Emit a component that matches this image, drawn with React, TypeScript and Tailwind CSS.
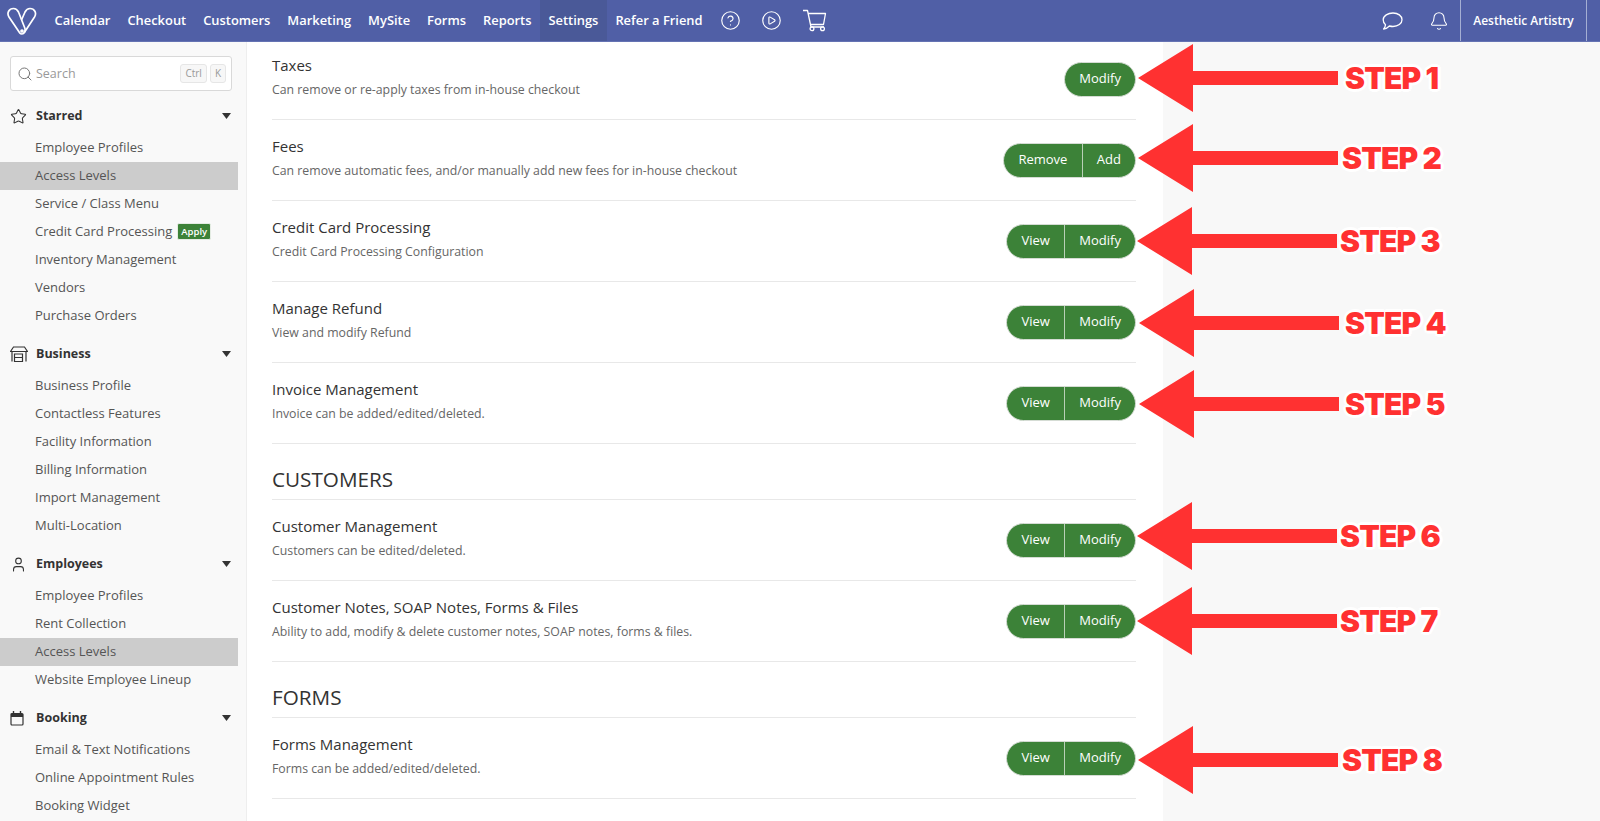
import React from 'react';
import { Bell, CircleHelp, CirclePlay, Search, Star, User } from 'lucide-react';

const navLinks = ['Calendar', 'Checkout', 'Customers', 'Marketing', 'MySite', 'Forms', 'Reports', 'Settings', 'Refer a Friend'];

const StoreIcon = () => (
	<svg width="18" height="16" viewBox="0 0 18 16" fill="none" stroke="#333" strokeWidth="1.2">
		<path d="M3.500 1h11l3 4.500H.5L3.500 1zM2 5.500v10M16 5.500v10M4.500 8h8v7.500h-8zM4.500 11.500h8" />
	</svg>
);

const CalendarIcon = () => (
	<svg width="14" height="15" viewBox="0 0 14 15" fill="none" stroke="#333">
		<rect x="1" y="2.500" width="12" height="11.500" rx="1" strokeWidth="1.2" />
		<path d="M1 4.500h12" strokeWidth="3" />
		<path d="M3.500 0v2.500M10.500 0v2.500" strokeWidth="1.400" />
	</svg>
);

const ChatIcon = () => (
	<svg width="21" height="18" viewBox="0 0 21 18" fill="none" stroke="#fff" strokeWidth="1.300" strokeLinejoin="round">
		<path d="M11 1c5 0 9 2.800 9 6.700s-4 6.800-9 6.800c-1.300 0-2.500-.2-3.600-.5C6 15.500 4 16.700 1.600 17c1-1.100 1.700-2.500 1.900-4.300C2 11.500 1.200 9.700 1.200 7.700 1.200 3.800 6 1 11 1z" />
	</svg>
);

const CartIcon = () => (
	<svg width="25" height="23" viewBox="0 0 25 23" fill="none" stroke="#fff" strokeWidth="1.300" strokeLinejoin="round">
		<path d="M1 1.500h4.500L9 18h13M6.200 4.500h17.300l-2 11H8.500" />
		<circle cx="10" cy="19.700" r="1.900" />
		<circle cx="20.500" cy="19.700" r="1.900" />
	</svg>
);

const Logo = () => (
	<svg width="30" height="28" viewBox="0 0 30 28" fill="none" stroke="#fff" strokeWidth="1.700">
		<path d="M12.800 26 2 10C-.5 6 2 1.500 6.500 1.500 9 1.500 10.500 3 11.500 5l6.300 16c1 3-.8 6-2.800 6-1 0-1.700-.3-2.200-1z" />
		<path d="M17 26 27.500 10C30 6 27.500 1.500 23 1.500c-2.500 0-4 1.500-5 3.500l-3.500 8" />
		<circle cx="15" cy="24" r="1" />
	</svg>
);

const Caret = () => (
	<svg width="9" height="6" viewBox="0 0 9 6" fill="#333">
		<path d="M0 0h9L4.500 6z" />
	</svg>
);

const sections = [
	{
		title: 'Starred',
		icon: <Star size={17} strokeWidth={1.5} />,
		items: ['Employee Profiles', 'Access Levels', 'Service / Class Menu', 'Credit Card Processing', 'Inventory Management', 'Vendors', 'Purchase Orders'],
	},
	{
		title: 'Business',
		icon: <StoreIcon />,
		items: ['Business Profile', 'Contactless Features', 'Facility Information', 'Billing Information', 'Import Management', 'Multi-Location'],
	},
	{
		title: 'Employees',
		icon: <User size={17} strokeWidth={1.5} />,
		items: ['Employee Profiles', 'Rent Collection', 'Access Levels', 'Website Employee Lineup'],
	},
	{
		title: 'Booking',
		icon: <CalendarIcon />,
		items: ['Email & Text Notifications', 'Online Appointment Rules', 'Booking Widget'],
	},
];

type Row = { title: string; desc: string; left?: string; right: string };

const permissions: { heading?: string; rows: Row[] }[] = [
	{
		rows: [
			{ title: 'Taxes', desc: 'Can remove or re-apply taxes from in-house checkout', right: 'Modify' },
			{ title: 'Fees', desc: 'Can remove automatic fees, and/or manually add new fees for in-house checkout', left: 'Remove', right: 'Add' },
			{ title: 'Credit Card Processing', desc: 'Credit Card Processing Configuration', left: 'View', right: 'Modify' },
			{ title: 'Manage Refund', desc: 'View and modify Refund', left: 'View', right: 'Modify' },
			{ title: 'Invoice Management', desc: 'Invoice can be added/edited/deleted.', left: 'View', right: 'Modify' },
		],
	},
	{
		heading: 'CUSTOMERS',
		rows: [
			{ title: 'Customer Management', desc: 'Customers can be edited/deleted.', left: 'View', right: 'Modify' },
			{ title: 'Customer Notes, SOAP Notes, Forms & Files', desc: 'Ability to add, modify & delete customer notes, SOAP notes, forms & files.', left: 'View', right: 'Modify' },
		],
	},
	{
		heading: 'FORMS',
		rows: [{ title: 'Forms Management', desc: 'Forms can be added/edited/deleted.', left: 'View', right: 'Modify' }],
	},
];

const steps = [
	{ label: 'STEP 1', y: 78, tip: 1138, text: 1345 },
	{ label: 'STEP 2', y: 158, tip: 1138, text: 1342 },
	{ label: 'STEP 3', y: 241, tip: 1137, text: 1340 },
	{ label: 'STEP 4', y: 323, tip: 1139, text: 1345 },
	{ label: 'STEP 5', y: 404, tip: 1139, text: 1345 },
	{ label: 'STEP 6', y: 536, tip: 1137, text: 1340 },
	{ label: 'STEP 7', y: 621, tip: 1137, text: 1340 },
	{ label: 'STEP 8', y: 760, tip: 1138, text: 1342 },
];

const PillButtons = ({ left, right }: { left?: string; right: string }) => (
	<div className="flex h-[35px] overflow-hidden rounded-full border border-[#d5dcd4] bg-[#3c8238] text-[13px] font-medium text-white">
		{left && <span className="flex items-center border-r border-[#b9d0b7] px-[14.500px]">{left}</span>}
		<span className="flex items-center px-[14px]">{right}</span>
	</div>
);

const StepArrow = ({ label, y, tip, text }: { label: string; y: number; tip: number; text: number }) => (
	<>
		<svg className="absolute" style={{ left: tip, top: y - 35 }} width="206" height="70" viewBox="0 0 206 70" fill="#ff3131">
			<path d="M0 35 55 1v27h145v14H55v27z" />
		</svg>
		<span
			className="absolute font-['Inter',sans-serif] text-[30px] leading-[36px] font-black tracking-[-0.8px] whitespace-nowrap text-[#ff3131] [text-shadow:-2px_-2px_0_#fff,2px_-2px_0_#fff,-2px_2px_0_#fff,2px_2px_0_#fff,0_3px_0_#fff,0_-3px_0_#fff,3px_0_0_#fff,-3px_0_0_#fff]"
			style={{ left: text, top: y - 18 }}
		>
			{label}
		</span>
	</>
);

const Sidebar = () => (
	<aside className="w-[247px] shrink-0 overflow-hidden border-r border-[#eeeeee] bg-[#f9f9f9]">
		<div className="mx-[10px] mt-[14px] mb-[7px] flex h-[35px] w-[222px] items-center rounded-[3px] border border-[#d9d9d9] bg-white pr-[5px] pl-[6px]">
			<Search size={16} strokeWidth={1.5} className="text-[#777]" />
			<span className="ml-[3px] flex-1 pt-[2px] text-[12.500px] text-[#999]">Search</span>
			<span className="rounded-[3px] border border-[#e6e6e6] bg-[#f7f7f7] px-[4px] py-[1px] text-[10px] text-[#999]">Ctrl</span>
			<span className="ml-[3px] rounded-[3px] border border-[#e6e6e6] bg-[#f7f7f7] px-[4px] py-[1px] text-[10px] text-[#999]">K</span>
		</div>
		{sections.map((section) => (
			<div key={section.title} className="mb-[6px] w-[238px]">
				<div className="flex h-[36px] items-center pr-[7px] pl-[10px]">
					<span className="flex w-[26px] text-[#333]">{section.icon}</span>
					<span className="flex-1 text-[12.500px] font-bold text-[#333]">{section.title}</span>
					<Caret />
				</div>
				{section.items.map((item) => (
					<div
						key={item}
						className={`flex h-[28px] items-center pl-[35px] text-[13px] text-[#555] ${item === 'Access Levels' ? 'bg-[#cccccc]' : ''}`}
					>
						{item}
						{item === 'Credit Card Processing' && (
							<span className="mb-[2px] ml-[5px] rounded-[2px] border border-[#e4ece3] bg-[#3c8238] px-[3px] text-[9.500px] leading-[15px] font-semibold text-white">Apply</span>
						)}
					</div>
				))}
			</div>
		))}
	</aside>
);

const App: React.FC = () => {
	return (
		<div className="relative flex h-[821px] w-[1600px] flex-col overflow-hidden bg-[#f8f8f8] font-['Open_Sans',sans-serif]">
			<header className="flex h-[42px] shrink-0 items-stretch border-b border-[#6573b3] bg-[#505fa6] text-[12.900px] font-semibold text-white">
				<div className="flex w-[46px] items-center justify-end pr-[9px]">
					<Logo />
				</div>
				{navLinks.map((link) => (
					<span key={link} className={`flex items-center px-[8.500px] ${link === 'Settings' ? 'bg-[#4a5998]' : ''}`}>
						{link}
					</span>
				))}
				<div className="ml-[9px] flex items-center gap-[20px]">
					<CircleHelp size={21} strokeWidth={1.3} />
					<CirclePlay size={21} strokeWidth={1.3} />
					<CartIcon />
				</div>
				<div className="ml-auto flex items-center gap-[26px] pr-[11px]">
					<ChatIcon />
					<Bell size={20} strokeWidth={1.3} />
				</div>
				<span className="flex w-[127px] items-center justify-center border-x border-[#a5afd3] text-[12px]">Aesthetic Artistry</span>
				<span className="w-[13px]" />
			</header>
			<div className="flex min-h-0 flex-1">
				<Sidebar />
				<main className="w-[916px] shrink-0 overflow-hidden bg-white pr-[27px] pl-[25px]">
					<div className="-mt-[3px]">
						{permissions.map((group, index) => (
							<section key={index}>
								{group.heading && (
									<h2 className="flex h-[56px] items-end border-b border-[#e8e8e8] pb-[7px] text-[20.700px] leading-[26px] text-[#333]">{group.heading}</h2>
								)}
								{group.rows.map((row) => (
									<div key={row.title} className="flex h-[81px] items-center justify-between border-b border-[#e8e8e8]">
										<div className="mb-[4px]">
											<div className="text-[15px] leading-[20px] text-[#333]">{row.title}</div>
											<div className="mt-[5px] text-[12.300px] leading-[20px] text-[#666]">{row.desc}</div>
										</div>
										<PillButtons left={row.left} right={row.right} />
									</div>
								))}
							</section>
						))}
					</div>
				</main>
			</div>
			{steps.map((step) => (
				<StepArrow key={step.label} {...step} />
			))}
		</div>
	);
};

export default App;
